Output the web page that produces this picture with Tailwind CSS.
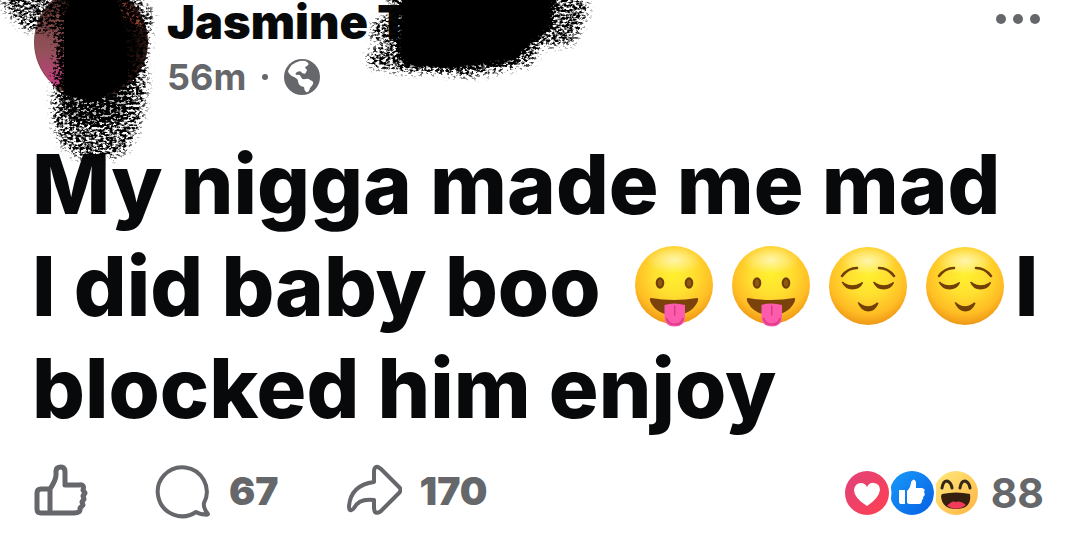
<!DOCTYPE html>
<html lang="en">
<head>
<meta charset="utf-8">
<meta name="viewport" content="width=device-width, initial-scale=1">
<title>Post</title>
<script src="https://cdn.jsdelivr.net/npm/@tailwindcss/browser@4"></script>
</head>
<body class="bg-white overflow-x-hidden font-['Inter',sans-serif] text-[#08090b]">
<svg class="absolute size-0" aria-hidden="true">
  <defs>
    <radialGradient id="face" cx="50%" cy="36%" r="64%">
      <stop offset="0" stop-color="#fff02e"/><stop offset=".4" stop-color="#ffe030"/><stop offset=".78" stop-color="#ffbd24"/><stop offset="1" stop-color="#ee9716"/>
    </radialGradient>
    <radialGradient id="shine">
      <stop offset="0" stop-color="#fff" stop-opacity=".6"/><stop offset="1" stop-color="#fff" stop-opacity="0"/>
    </radialGradient>
    <symbol id="tongue" viewBox="0 0 80 82">
      <circle cx="40" cy="40" r="39" fill="url(#face)"/>
      <ellipse cx="40" cy="15" rx="28" ry="14" fill="url(#shine)"/>
      <ellipse cx="26" cy="38" rx="4.3" ry="5.8" fill="#6e3f0a"/><ellipse cx="55" cy="38" rx="4.3" ry="5.8" fill="#6e3f0a"/>
      <ellipse cx="26" cy="38" rx="2.2" ry="3.4" fill="#8f5712"/><ellipse cx="55" cy="38" rx="2.2" ry="3.4" fill="#8f5712"/>
      <path d="M17 53Q40 57 63 53Q65 53 63.500 57Q57 70 40 70Q23 70 16.500 57Q15 53 17 53Z" fill="#7b430b"/>
      <path d="M30.500 60Q40 57 51 60V72Q51 81.500 40.500 81.500Q30.500 81.500 30.500 72Z" fill="#fc5cab"/>
      <path d="M32.500 73Q34 79.500 40.500 79.500Q48 79.500 49 73" fill="none" stroke="#e23d8c" stroke-width="2"/>
      <path d="M40.700 61V70" stroke="#d83c85" stroke-width="1.500" stroke-linecap="round"/>
    </symbol>
    <symbol id="relieved" viewBox="0 0 80 82">
      <circle cx="40" cy="41" r="39" fill="url(#face)"/>
      <ellipse cx="40" cy="16" rx="28" ry="14" fill="url(#shine)"/>
      <g fill="none" stroke="#704006" stroke-width="2.600" stroke-linecap="round">
        <path d="M14 31Q20 23 29 23"/><path d="M51 23Q60 23 66 31"/>
      </g>
      <g fill="#704006">
        <path d="M13.500 37Q15 36 16.500 38Q24 42.500 32.500 38Q35 36 35 38Q32 44.500 24.500 44.500Q17 44.500 13.500 37Z"/>
        <path d="M45 37Q46.500 36 48 38Q56 42.500 63.500 38Q66 36 66 38Q63 44.500 55.500 44.500Q48 44.500 45 37Z"/>
        <path d="M29.500 57.500Q31 56.500 33 59Q40 63.500 47 59Q50 56.500 50.500 58.500Q47 66.500 40 66.500Q33 66 29.500 57.500Z"/>
      </g>
    </symbol>
    <radialGradient id="photo" cx="62%" cy="50%" r="62%">
      <stop offset="0" stop-color="#090608"/><stop offset=".55" stop-color="#2a1512"/><stop offset="1" stop-color="#7c4642"/>
    </radialGradient>
    <linearGradient id="tint" x1="0" y1="0" x2="0" y2="1">
      <stop offset="0" stop-color="#7a4743"/><stop offset=".5" stop-color="#93505a"/><stop offset="1" stop-color="#c83c82"/>
    </linearGradient>
    <filter id="grain" x="-20%" y="-20%" width="140%" height="140%" color-interpolation-filters="sRGB">
      <feGaussianBlur in="SourceGraphic" stdDeviation="4" result="soft"/>
      <feTurbulence type="fractalNoise" baseFrequency=".3 .4" numOctaves="4" seed="11"/>
      <feColorMatrix values="0 0 0 0 0  0 0 0 0 0  0 0 0 0 0  3 0 0 0 -1" result="noise"/>
      <feComposite in="soft" in2="noise" operator="arithmetic" k2=".65" k3=".35"/>
      <feComponentTransfer><feFuncA type="linear" slope="4" intercept="-1.440"/></feComponentTransfer>
    </filter>
  </defs>
</svg>

<article class="relative">
  <!-- Marker strokes over the avatar and surname -->
  <svg class="absolute left-0 top-0 z-10 h-[170px] w-[600px] pointer-events-none" viewBox="0 0 600 170" aria-hidden="true">
    <g filter="url(#grain)">
      <path d="M2 -20H118L154 12L149 42L146 100Q142 134 122 156Q104 162 80 159Q58 150 53 124L52 92L54 70L56 34L24 30L4 10Z" fill-opacity=".52"/>
    </g>
    <g filter="url(#grain)">
      <path d="M58 -20H122L138 15L139 80L130 120Q106 134 76 128L58 110L56 40Z" fill-opacity=".66"/>
    </g>
    <g filter="url(#grain)">
      <path d="M386 -20H586L588 14L574 44L540 48L532 66L508 70L466 78L440 73L392 72L367 66L368 50L388 44L368 38L372 22L390 14Z" fill-opacity=".52"/>
    </g>
    <path filter="url(#grain)" d="M402 -20H558L554 28L530 48L514 64L462 70L402 68L394 50Z"/>
    <path d="M72 -2H116Q128 20 128 80L96 102L64 94V20ZM408 -2H540V30L500 58L450 68L410 64Z"/>
  </svg>

  <header class="flex h-[133px] items-start pl-[33px] pr-10">
    <svg class="-mt-4 mr-[17px] h-[117px] w-[117px] shrink-0" viewBox="0 0 117 117" role="img" aria-label="Profile picture">
      <circle cx="58" cy="58" r="57" fill="url(#photo)"/>
      <path d="M8 30Q-10 70 23 104L34 90V30Z" fill="url(#tint)"/>
      <path d="M78 8Q102 20 110 44L92 36L80 30Z" fill="#94412f"/>
    </svg>
    <div class="min-w-0 grow">
      <h1 class="mb-[7px] whitespace-nowrap text-[47px] leading-[44px] font-black">Jasmine T</h1>
      <div class="flex items-center text-[36px] leading-[52px] font-bold text-[#65676b]">
        <span>56m</span>
        <span class="mx-4 size-[6px] rounded-full bg-[#65676b]"></span>
        <svg class="size-9" viewBox="0 0 36 36" role="img" aria-label="Public">
          <circle cx="18" cy="18" r="18" fill="#65676b"/>
          <path d="M16 2Q21 1 23 3Q26 5 23 7Q20 8 22 10Q24 11 22 13Q22 16 18 14Q17 11 13 13Q10 15 13 16Q16 15 17 18Q18 21 21 20Q25 19 26 21Q30 22 29 25Q28 27 26 29Q25 34 22 33Q20 31 20 28Q14 27 14 22Q14 20 10 18Q5 16 4 12Q7 4 16 2Z" fill="#fff"/>
        </svg>
      </div>
    </div>
    <button type="button" aria-label="More options" class="mt-[14px] flex gap-[7px]">
      <span class="size-[10px] rounded-full bg-[#65676b]"></span>
      <span class="size-[10px] rounded-full bg-[#65676b]"></span>
      <span class="size-[10px] rounded-full bg-[#65676b]"></span>
    </button>
  </header>

  <p class="pl-8 text-[83px] leading-[102px] font-extrabold">
    <span class="block whitespace-nowrap">My nigga made me mad</span>
    <span class="flex items-center whitespace-nowrap">I did baby boo
      <span class="ml-[33px] flex gap-[17px]">
        <svg class="h-[82px] w-20" role="img" aria-label="😛"><use href="#tongue"/></svg>
        <svg class="h-[82px] w-20" role="img" aria-label="😛"><use href="#tongue"/></svg>
        <svg class="h-[82px] w-20" role="img" aria-label="😌"><use href="#relieved"/></svg>
        <svg class="h-[82px] w-20" role="img" aria-label="😌"><use href="#relieved"/></svg>
      </span>
      <span class="ml-[10px]">I</span>
    </span>
    <span class="block whitespace-nowrap">blocked him enjoy</span>
  </p>

  <footer class="flex h-[97px] items-center pt-[6px] pl-8 pr-9 text-[39px] leading-[48px] font-black text-[#65676b]">
    <button type="button" aria-label="Like">
      <svg class="size-14" viewBox="0 0 56 56" fill="none" stroke="#65676b" stroke-width="5" stroke-linejoin="round" stroke-linecap="round">
        <path d="M18 26H9Q5 26 5 30V46Q5 50 9 50H42Q49 50 48 45L51 42L50 39L52 36L51 33L53 30L51 27Q53 21 47 22H33V9Q33 4 29 4Q24 4 24 8V12Q24 17 18 26V49"/>
      </svg>
    </button>
    <button type="button" aria-label="67 comments" class="ml-[67px] flex items-center">
      <svg class="mr-[18px] size-14" viewBox="0 0 56 56" fill="none" stroke="#65676b" stroke-width="4" stroke-linejoin="round">
        <path d="M41 49A24.500 24.500 0 1 1 49 40Q48 45 53 51Q53 52 50 51.500Q44 51 41 49Z"/>
      </svg>
      67
    </button>
    <button type="button" aria-label="170 shares" class="ml-[67px] flex items-center">
      <svg class="mr-[18px] size-14" viewBox="0 0 56 56" fill="none" stroke="#65676b" stroke-width="4" stroke-linejoin="round">
        <path d="M28 19V9Q28 3 32 4L35 6L53 24Q56 27 53 30L35 48Q32 51 29 49Q28 47 28 44V37Q13 35 8 45Q6 48 4 47Q3 46 3 43Q5 22 28 19Z"/>
      </svg>
      170
    </button>
    <button type="button" aria-label="88 reactions" class="ml-auto flex items-center pt-1 text-[41px] font-bold">
      <svg class="mr-3 h-[46px] w-[134px]" viewBox="0 0 134 46" aria-hidden="true">
        <defs>
          <linearGradient id="red" x1="0" y1="0" x2="1" y2="1"><stop stop-color="#e0427c"/><stop offset="1" stop-color="#ff4050"/></linearGradient>
          <linearGradient id="blue" x1="0" y1="0" x2="1" y2="1"><stop stop-color="#189bfa"/><stop offset="1" stop-color="#075ee4"/></linearGradient>
          <linearGradient id="yellow" x1="0" y1="0" x2="1" y2="1"><stop stop-color="#ffeb7c"/><stop offset="1" stop-color="#ffb342"/></linearGradient>
        </defs>
        <circle cx="111" cy="23" r="22" fill="url(#yellow)"/>
        <path d="M97 18Q98 11 102 11Q106 12 107 18M115 18Q116 11 120 11Q124 12 125 18" fill="none" stroke="#342719" stroke-width="3" stroke-linecap="round"/>
        <path d="M97 24Q111 21 125 24Q127 39 111 39Q97 39 96 26Z" fill="#35200f"/>
        <path d="M102 36Q107 30 111 32Q116 30 121 35Q112 42 102 36Z" fill="#f33b59"/>
        <circle cx="67" cy="23" r="22" fill="url(#blue)"/>
        <path d="M88 16Q90 23 88 31L91 31V15Z" fill="#fff"/>
        <circle cx="22" cy="23" r="24.500" fill="#fff"/>
        <circle cx="22" cy="23" r="22" fill="url(#red)"/>
        <path d="M22 36Q9 28 9 20Q10 13 16 13Q20 13 22 17Q25 12 29 13Q35 14 35 20Q34 28 22 36Z" fill="#fff"/>
        <path d="M54 20H60V34H56Q54 34 54 32ZM62 21Q66 17 66 12Q69 7 71 12V18H77Q81 19 79 22Q81 25 78 27Q79 29 77 30Q77 34 74 34H64L62 33Z" fill="#fff"/>
      </svg>
      88
    </button>
  </footer>
</article>
</body>
</html>
